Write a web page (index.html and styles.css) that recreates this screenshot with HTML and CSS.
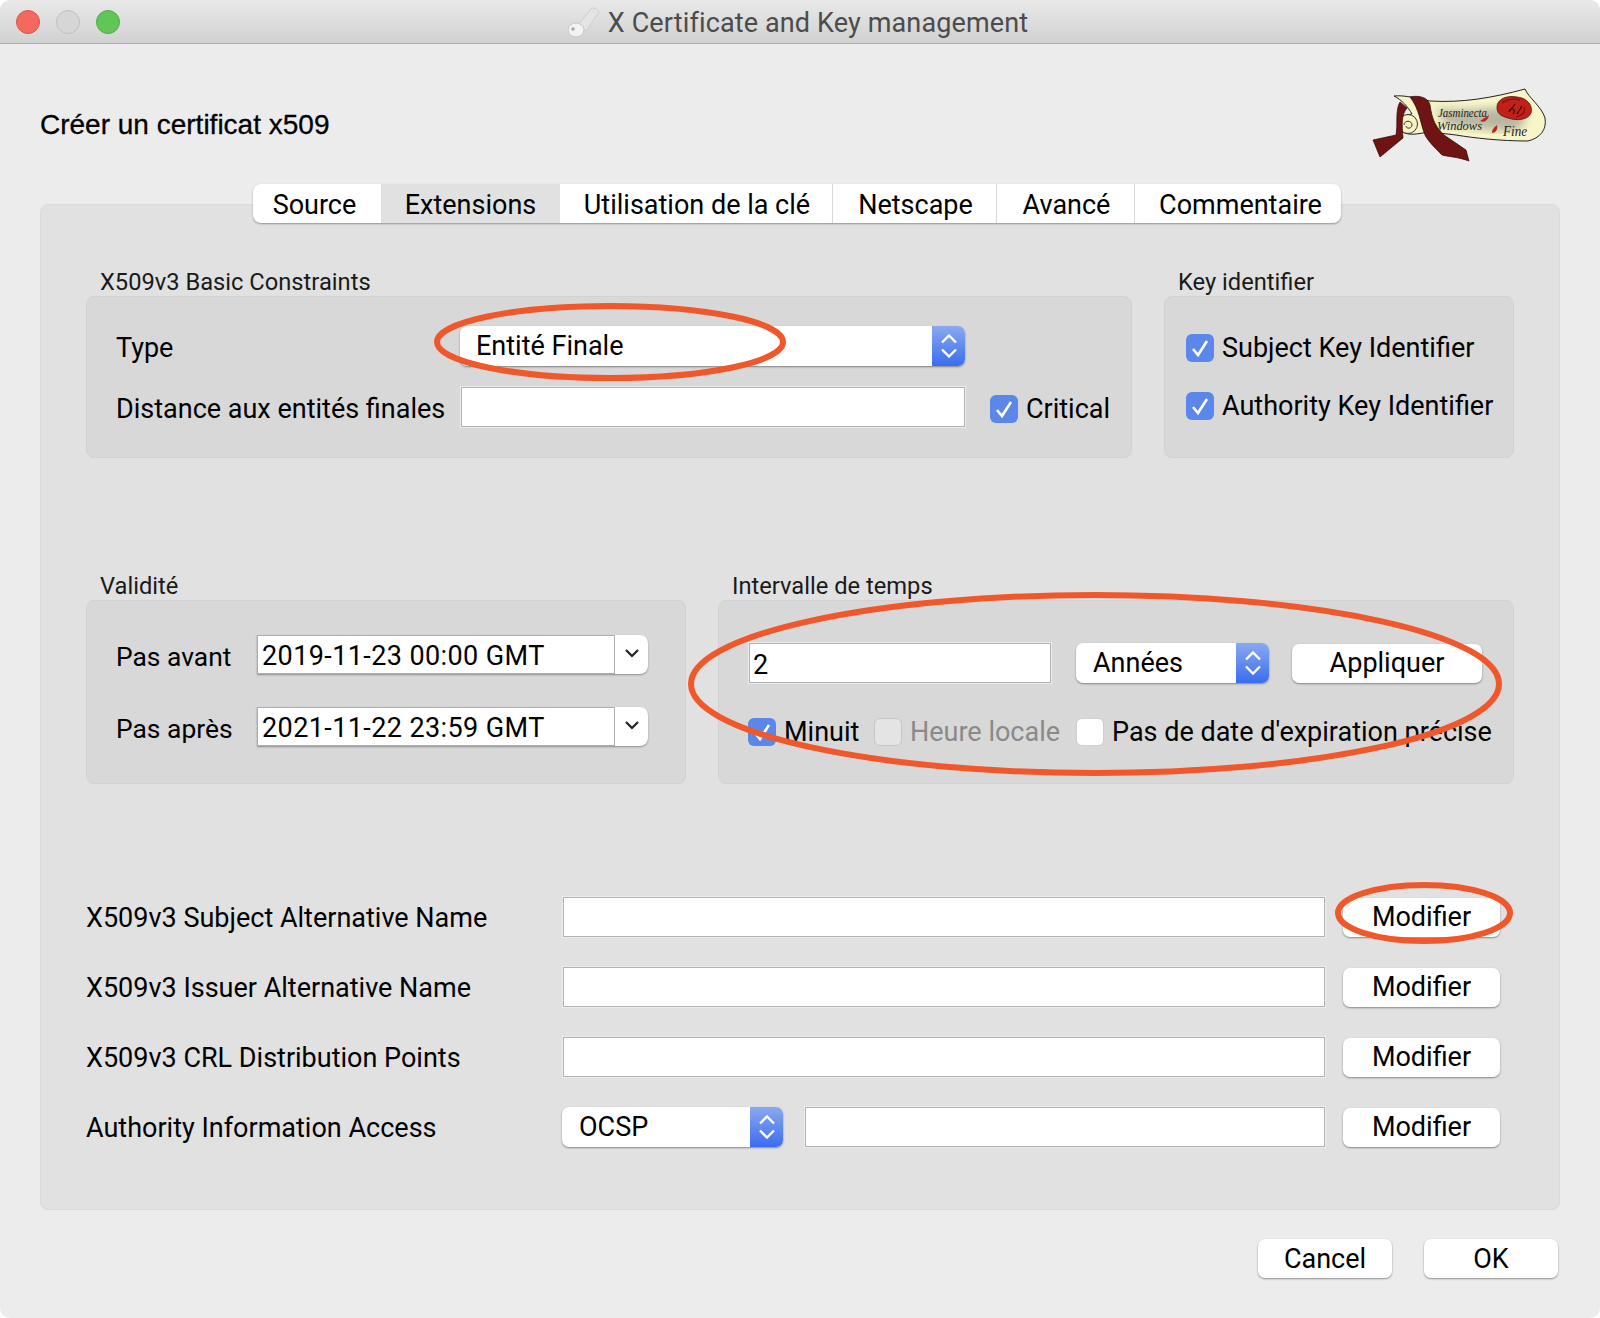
FILE: index.html
```html
<!DOCTYPE html>
<html lang="fr">
<head>
    <meta charset="UTF-8">
    <title>X Certificate and Key management</title>
    <link rel="stylesheet" href="styles.css">
</head>
<body>
<div class="window">
    <div class="titlebar">
        <div class="lights">
            <span class="light red"></span>
            <span class="light gray"></span>
            <span class="light green"></span>
        </div>
        <div class="title">
            <svg class="key" viewBox="0 0 32 34" width="32" height="34">
                <path d="M11 19 L24 3 Q28 2 31 7 L18 26 Z" fill="#e4e4e4" stroke="#cfcfcf" stroke-width="1"/>
                <ellipse cx="8" cy="25" rx="8" ry="7" fill="#f3f3f3" stroke="#c6c6c6" stroke-width="1"/>
                <circle cx="5" cy="24" r="1.8" fill="#a8a8a8"/>
            </svg>
            <span>X Certificate and Key management</span>
        </div>
    </div>

    <div class="header">
        <h1>Créer un certificat x509</h1>
        <svg class="logo" viewBox="0 0 180 80" width="180" height="80">
            <defs>
                <filter id="soft"><feGaussianBlur stdDeviation="4"/></filter>
            </defs>
            <path d="M24 11 C34 10 46 13 60 16 C92 18 122 13 155 4 C158 12 172 22 175 33 C177 45 170 53 158 56 C130 56 104 53 86 50 L60 47 L46 49 C38 50 30 48 29 41 C28 34 34 30 42 29 C38 22 32 15 24 11 Z" fill="#f8f5c8" stroke="#222" stroke-width="1"/>
            <path d="M66 24 C95 26 120 24 150 20 C158 30 156 40 146 46 C120 46 95 42 76 40 Z" fill="#9c9c92" opacity="0.7" filter="url(#soft)"/>
            <circle cx="38" cy="39" r="9.5" fill="#f8f2c0" stroke="#333" stroke-width="1"/>
            <path d="M34 40 C34 35 42 35 42 40 C42 44 36 44 36 41" fill="none" stroke="#333" stroke-width="1"/>
            <path d="M30 17 C25 25 28 40 26 50 L3 55 L10 72 L33 53 C32 40 31 30 37 23 Z" fill="#701313" stroke="#2a0606" stroke-width="0.7"/>
            <path d="M40 12 C48 10 58 12 60 20 C62 35 66 42 74 50 L96 65 L99 76 C88 72 80 72 72 70 C64 62 58 56 55 50 C50 38 50 25 40 12 Z" fill="#701313" stroke="#2a0606" stroke-width="0.7"/>
            <path d="M127 22 C127 14 137 10 147 12 C158 13 163 21 161 28 C158 35 147 36 138 33 C131 31 127 29 127 22 Z" fill="#c4201a" stroke="#501010" stroke-width="0.8"/>
            <path d="M132 18 C138 14 144 13 150 15 M154 22 C156 27 152 31 146 32" fill="none" stroke="#8a1410" stroke-width="1.6"/>
            <path d="M139 27 L145 19 M147 29 L152 21 M143 29 C147 24 141 22 139 26" fill="none" stroke="#2e0808" stroke-width="1.1"/>
            <path d="M110 36 L119 30 C118 35 115 38 110 36 Z M122 48 C122 44 125 42 127 40 C128 44 126 48 122 48 Z" fill="#c4201a"/>
            <text class="logo-text" x="68" y="32" textLength="49" lengthAdjust="spacingAndGlyphs">Jasminecta</text>
            <text class="logo-text" x="67" y="45" textLength="45" lengthAdjust="spacingAndGlyphs">Windows</text>
            <text class="logo-text logo-fine" x="133" y="51" textLength="24" lengthAdjust="spacingAndGlyphs">Fine</text>
        </svg>
    </div>

    <div class="tabs">
        <div class="tab tab-source">Source</div>
        <div class="tab tab-active tab-ext">Extensions</div>
        <div class="tab tab-use">Utilisation de la clé</div>
        <div class="tab tab-net">Netscape</div>
        <div class="tab tab-adv">Avancé</div>
        <div class="tab tab-com">Commentaire</div>
    </div>

    <div class="panel">
        <div class="group-row">
            <section class="group basic">
                <h2>X509v3 Basic Constraints</h2>
                <div class="group-box basic-box">
                    <span class="field-label">Type</span>
                    <div class="select select-type">
                        <span class="select-text">Entité Finale</span>
                        <span class="stepper"><svg viewBox="0 0 16 24" width="16" height="24"><path d="M1 8.5 L8 1.5 L15 8.5 M1 15.5 L8 22.5 L15 15.5" fill="none" stroke="#fff" stroke-width="2.4"/></svg></span>
                    </div>
                    <span></span>
                    <span class="field-label">Distance aux entités finales</span>
                    <input class="line-input" type="text">
                    <label class="check"><span class="box on"><svg viewBox="0 0 28 28" width="28" height="28"><path d="M7 15 L12 21 L21 7" fill="none" stroke="#fff" stroke-width="2.6"/></svg></span>Critical</label>
                </div>
            </section>
            <section class="group keyid">
                <h2>Key identifier</h2>
                <div class="group-box keyid-box">
                    <label class="check"><span class="box on"><svg viewBox="0 0 28 28" width="28" height="28"><path d="M7 15 L12 21 L21 7" fill="none" stroke="#fff" stroke-width="2.6"/></svg></span>Subject Key Identifier</label>
                    <label class="check"><span class="box on"><svg viewBox="0 0 28 28" width="28" height="28"><path d="M7 15 L12 21 L21 7" fill="none" stroke="#fff" stroke-width="2.6"/></svg></span>Authority Key Identifier</label>
                </div>
            </section>
        </div>

        <div class="group-row time-row">
            <section class="group validity">
                <h2>Validité</h2>
                <div class="group-box validity-box">
                    <div class="date-row">
                        <span class="date-label">Pas avant</span>
                        <div class="date-combo">
                            <input type="text" value="2019-11-23 00:00 GMT">
                            <span class="combo-arrow"><svg viewBox="0 0 16 10" width="16" height="10"><path d="M2 2 L8 8 L14 2" fill="none" stroke="#222" stroke-width="2.2"/></svg></span>
                        </div>
                    </div>
                    <div class="date-row">
                        <span class="date-label">Pas après</span>
                        <div class="date-combo">
                            <input type="text" value="2021-11-22 23:59 GMT">
                            <span class="combo-arrow"><svg viewBox="0 0 16 10" width="16" height="10"><path d="M2 2 L8 8 L14 2" fill="none" stroke="#222" stroke-width="2.2"/></svg></span>
                        </div>
                    </div>
                </div>
            </section>
            <section class="group interval">
                <h2>Intervalle de temps</h2>
                <div class="group-box interval-box">
                    <div class="interval-top">
                        <input class="line-input count-input" type="text" value="2">
                        <div class="select select-unit">
                            <span class="select-text">Années</span>
                            <span class="stepper"><svg viewBox="0 0 16 24" width="16" height="24"><path d="M1 8.5 L8 1.5 L15 8.5 M1 15.5 L8 22.5 L15 15.5" fill="none" stroke="#fff" stroke-width="2.4"/></svg></span>
                        </div>
                        <button class="btn btn-apply">Appliquer</button>
                    </div>
                    <div class="interval-checks">
                        <label class="check check-midnight"><span class="box on"><svg viewBox="0 0 28 28" width="28" height="28"><path d="M7 15 L12 21 L21 7" fill="none" stroke="#fff" stroke-width="2.6"/></svg></span>Minuit</label>
                        <label class="check check-local disabled"><span class="box off"></span>Heure locale</label>
                        <label class="check"><span class="box"></span>Pas de date d'expiration précise</label>
                    </div>
                </div>
            </section>
        </div>

        <div class="ext-rows">
            <div class="ext-row">
                <span class="ext-label">X509v3 Subject Alternative Name</span>
                <input class="line-input ext-field" type="text">
                <button class="btn btn-mod">Modifier</button>
            </div>
            <div class="ext-row">
                <span class="ext-label">X509v3 Issuer Alternative Name</span>
                <input class="line-input ext-field" type="text">
                <button class="btn btn-mod">Modifier</button>
            </div>
            <div class="ext-row">
                <span class="ext-label">X509v3 CRL Distribution Points</span>
                <input class="line-input ext-field" type="text">
                <button class="btn btn-mod">Modifier</button>
            </div>
            <div class="ext-row">
                <span class="ext-label">Authority Information Access</span>
                <div class="ext-field ocsp-field">
                    <div class="select select-ocsp">
                        <span class="select-text">OCSP</span>
                        <span class="stepper"><svg viewBox="0 0 16 24" width="16" height="24"><path d="M1 8.5 L8 1.5 L15 8.5 M1 15.5 L8 22.5 L15 15.5" fill="none" stroke="#fff" stroke-width="2.4"/></svg></span>
                    </div>
                    <input class="line-input" type="text">
                </div>
                <button class="btn btn-mod">Modifier</button>
            </div>
        </div>
    </div>

    <div class="footer">
        <button class="btn btn-foot">Cancel</button>
        <button class="btn btn-foot">OK</button>
    </div>

    <!-- red marks drawn over the screenshot -->
    <svg class="marks" viewBox="0 0 1600 1318" width="1600" height="1318">
        <ellipse cx="610" cy="342" rx="173" ry="36"/>
        <ellipse cx="1095" cy="684" rx="404" ry="89"/>
        <ellipse cx="1424" cy="913" rx="86" ry="28"/>
    </svg>
</div>
</body>
</html>
```

FILE: styles.css
```css
* {
    box-sizing: border-box;
}

body {
    margin: 0;
    background: #fff;
    font-family: Roboto, "Liberation Sans", sans-serif;
    color: #000;
}

.window {
    position: relative;
    width: 1600px;
    height: 1318px;
    background: #ececec;
    border-radius: 10px;
    overflow: hidden;
    font-size: 27px;
}

.titlebar {
    display: flex;
    justify-content: center;
    position: relative;
    height: 44px;
    background: linear-gradient(#e9e9e9, #d1d1d1);
    border-bottom: 1px solid #afafaf;
}

.lights {
    position: absolute;
    left: 16px;
    top: 10px;
    display: flex;
    gap: 16px;
}

.light {
    width: 24px;
    height: 24px;
    border-radius: 50%;
}

.red {
    background: #f3695f;
    border: 1px solid #df5248;
}

.gray {
    background: #d6d6d6;
    border: 1px solid #c0c0c0;
}

.green {
    background: #60c655;
    border: 1px solid #50ad47;
}

.title {
    display: flex;
    align-items: center;
    gap: 8px;
    color: #4c4c4c;
    letter-spacing: 0.13px;
    padding: 2px 4px 0 0;
}

.key {
    margin-top: -2px;
}

.header {
    display: flex;
    justify-content: space-between;
    height: 140px;
    padding: 41px 50px 0 40px;
}

h1 {
    margin: 22px 0 0;
    font-family: "Liberation Sans", sans-serif;
    font-size: 28px;
    line-height: 36px;
    font-weight: normal;
    -webkit-text-stroke: 0.3px #000;
}

.logo-text {
    font-family: "Liberation Serif", serif;
    font-style: italic;
    font-size: 12px;
    fill: #1e1e1e;
}

.logo-fine {
    font-size: 15px;
}

.tabs {
    display: flex;
    position: relative;
    z-index: 1;
    width: 1088px;
    height: 39px;
    margin: 0 0 -19px 253px;
    background: #fff;
    border-radius: 8px;
    box-shadow: 0 1px 2px rgba(0, 0, 0, 0.35);
    overflow: hidden;
}

.tab {
    display: flex;
    align-items: center;
    justify-content: center;
    padding-top: 3px;
    border-right: 1px solid #d8d8d8;
}

.tab-source { width: 128px; padding-right: 5px; border-right: none; }
.tab-ext { width: 179px; border-right: none; }
.tab-use { width: 273px; padding-left: 2px; }
.tab-net { width: 164px; padding-left: 2px; }
.tab-adv { width: 138px; padding-left: 2px; }
.tab-com { width: 206px; padding-left: 5px; border-right: none; }

.tab-active {
    background: #e1e1e1;
}

.panel {
    width: 1520px;
    height: 1006px;
    margin-left: 40px;
    padding: 62px 45px 0;
    background: #e1e1e1;
    border: 1px solid #dadada;
    border-radius: 8px;
}

.group-row {
    display: flex;
    gap: 32px;
}

.time-row {
    margin-top: 113px;
}

h2 {
    margin: 0 0 0 14px;
    height: 29px;
    font-size: 23.7px;
    line-height: 30px;
    font-weight: normal;
    color: #1a1a1a;
}

.group-box {
    background: #d8d8d8;
    border: 1px solid #d2d2d2;
    border-radius: 8px;
}

.basic { width: 1046px; }
.keyid { width: 350px; }
.validity { width: 600px; }
.interval { width: 796px; }

.basic-box {
    display: grid;
    grid-template-columns: 345px 504px auto;
    grid-template-rows: 40px 40px;
    row-gap: 21px;
    align-items: center;
    height: 162px;
    padding: 29px 0 0 29px;
}

.field-label {
    padding-top: 4px;
    white-space: nowrap;
}

.keyid-box {
    display: flex;
    flex-direction: column;
    gap: 28px;
    height: 162px;
    padding: 36px 0 0 21px;
}

.check {
    display: flex;
    align-items: center;
    gap: 8px;
    line-height: 30px;
    white-space: nowrap;
}

.basic-box .check {
    margin: 3px 0 0 25px;
}

.box {
    flex: none;
    width: 28px;
    height: 28px;
    background: #fff;
    border: 1px solid #cfcfcf;
    border-radius: 6px;
}

.box.on {
    background: #5b87ea;
    border: none;
}

.box svg {
    display: block;
}

.box.off {
    background: #e4e4e4;
    border-color: #c6c6c6;
}

.disabled {
    color: #8a8a8a;
}

input {
    font: inherit;
    color: #000;
    outline: none;
}

.line-input {
    width: 100%;
    height: 40px;
    padding: 0 4px;
    background: #fff;
    border: 1px solid #b2b2b2;
    box-shadow: 0 0 0 1px #ececec;
}

.select {
    display: flex;
    height: 40px;
    background: #fff;
    border-radius: 7px;
    box-shadow: 0 1px 2px rgba(0, 0, 0, 0.4);
    overflow: hidden;
}

.select-text {
    flex: 1;
    padding-left: 17px;
    line-height: 40px;
}

.stepper {
    display: flex;
    align-items: center;
    justify-content: center;
    width: 33px;
    background: linear-gradient(#8ba9ef, #3a6df0);
}

.select-type {
    width: 505px;
    margin-left: -1px;
}

.select-type .select-text {
    padding-left: 16px;
}

.select-unit {
    width: 193px;
}

.select-ocsp {
    flex: none;
    width: 221px;
    margin-left: -1px;
}

.validity-box {
    display: flex;
    flex-direction: column;
    gap: 33px;
    height: 184px;
    padding: 34px 0 0 29px;
}

.date-row {
    display: flex;
    align-items: center;
}

.date-label {
    width: 141px;
    padding-top: 4px;
    font-size: 26.4px;
}

.date-combo {
    display: flex;
    width: 391px;
    height: 39px;
    background: #fff;
    border-radius: 0 8px 8px 0;
    box-shadow: 0 1px 2px rgba(0, 0, 0, 0.35);
}

.date-combo input {
    width: 358px;
    padding: 2px 4px 0;
    border: 1px solid #aeaeae;
    letter-spacing: 0.4px;
}

.combo-arrow {
    display: flex;
    align-items: center;
    justify-content: center;
    flex: 1;
    padding-bottom: 3px;
}

.interval-box {
    height: 184px;
    padding: 42px 0 0 30px;
}

.interval-top {
    display: flex;
    align-items: center;
    height: 40px;
}

.count-input {
    flex: none;
    width: 302px;
    margin-right: 25px;
    padding: 3px 3px 0;
}

.btn {
    height: 39px;
    padding: 0;
    font: inherit;
    background: #fff;
    border: none;
    border-radius: 7px;
    box-shadow: 0 1px 2px rgba(0, 0, 0, 0.4);
    color: #000;
}

.btn-apply {
    flex: none;
    width: 190px;
    margin-left: 23px;
}

.interval-checks {
    display: flex;
    margin: 34px 0 0 -1px;
}

.check-midnight {
    width: 126px;
}

.check-local {
    width: 202px;
}

.ext-rows {
    display: flex;
    flex-direction: column;
    gap: 30px;
    margin-top: 113px;
}

.ext-row {
    display: flex;
    align-items: center;
    height: 40px;
}

.ext-label {
    width: 477px;
    padding-top: 2px;
}

.ext-field {
    flex: none;
    width: 762px;
}

.ocsp-field {
    display: flex;
    gap: 22px;
}

.btn-mod {
    width: 157px;
    margin-left: 18px;
}

.footer {
    display: flex;
    justify-content: flex-end;
    gap: 32px;
    padding: 29px 42px 0 0;
}

.btn-foot {
    width: 134px;
}

.marks {
    position: absolute;
    left: 0;
    top: 0;
    pointer-events: none;
}

.marks ellipse {
    fill: none;
    stroke: #f0572a;
    stroke-width: 6;
}
```
